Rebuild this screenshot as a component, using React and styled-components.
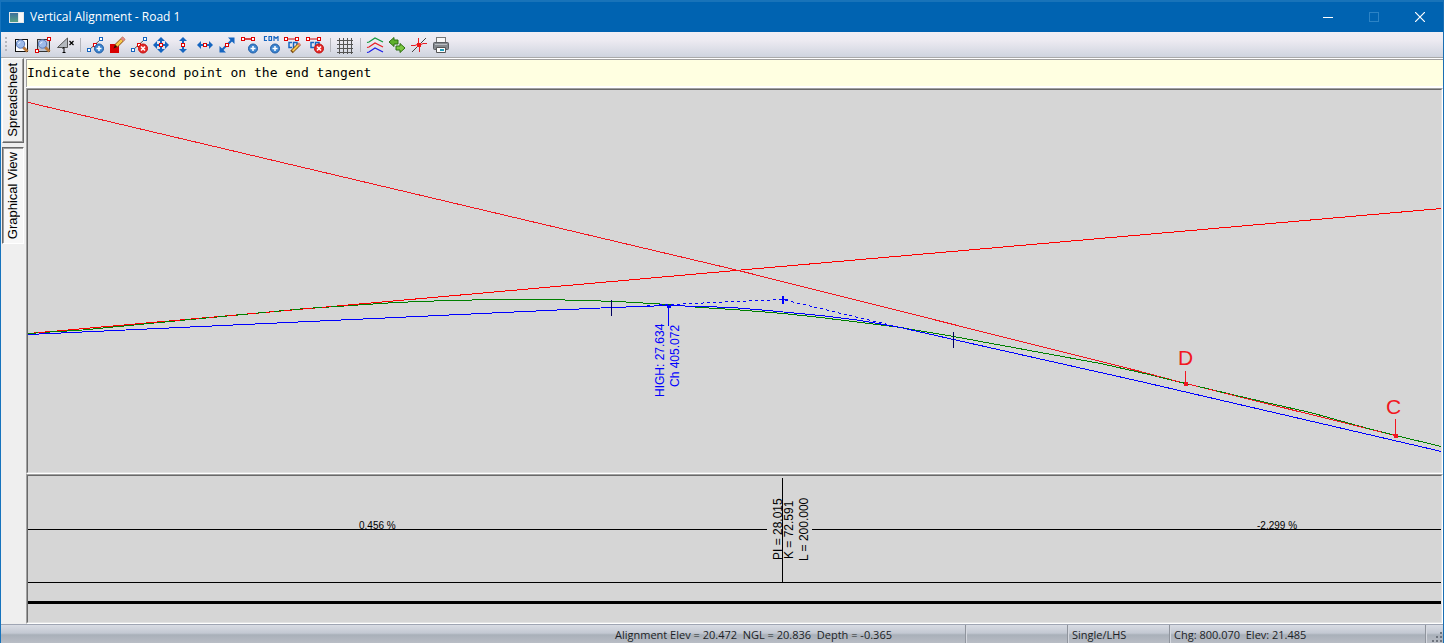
import React, { useState } from "react";
import styled, { createGlobalStyle } from "styled-components";

const GlobalStyle = createGlobalStyle`
  * { box-sizing: border-box; }
  body { margin: 0; background: #f0f0f0; font-family: "Open Sans", "Noto Sans", sans-serif; }
  button { font: inherit; color: inherit; }
`;

const Window = styled.div`
  display: flex;
  flex-direction: column;
  min-height: 100vh;
  border-left: 1px solid #1673bd;
  border-right: 1px solid #1a6fb3;
`;

const TitleBar = styled.header`
  display: flex;
  align-items: center;
  height: 32px;
  padding-left: 8px;
  border-top: 2px solid #1873b9;
  background: #0063b1;
  color: #fff;
`;

const Title = styled.h1`
  flex: 1;
  margin: 0 0 0 6px;
  font-size: 12px;
  line-height: 16px;
  font-weight: 400;
`;

const CaptionButton = styled.button`
  display: flex;
  align-items: center;
  justify-content: center;
  width: 46px;
  height: 28px;
  padding: 0;
  border: 0;
  background: transparent;
  color: ${(p) => (p.disabled ? "#2c83c5" : "#fff")};
`;

const Toolbar = styled.div`
  display: flex;
  align-items: center;
  height: 26px;
  padding-left: 4px;
  background: linear-gradient(#f0eff5, #eceaf1 35%, #cfd4df);
  border-bottom: 1px solid #a9a9a9;
`;

const Grip = styled.span`
  width: 2px;
  height: 16px;
  margin-right: 3px;
  background: repeating-linear-gradient(#b4b6bd 0 2px, transparent 2px 4px);
`;

const ToolButton = styled.button`
  display: flex;
  align-items: center;
  justify-content: center;
  width: 22px;
  height: 22px;
  padding: 0;
  border: 0;
  background: transparent;
`;

const ToolSeparator = styled.span`
  width: 8px;
  height: 14px;
  display: flex;
  justify-content: center;
  &::before {
    content: "";
    width: 1px;
    background: #b3b4bb;
  }
`;

const Body = styled.main`
  display: flex;
  flex: 1;
  background: #efefef;
`;

const TabColumn = styled.nav`
  display: flex;
  flex-direction: column;
  flex: none;
  gap: 4px;
  width: 25px;
  padding: 0 2px 0 1px;
`;

const Tab = styled.button`
  display: flex;
  align-items: center;
  justify-content: center;
  width: 22px;
  padding: ${(p) => (p.$active ? "4px 1px 4px 0" : "4px 1px 5px 0")};
  border: 1px solid;
  border-color: ${(p) => (p.$active ? "#696969 #fff #fff #696969" : "#fff #696969 #696969 #fff")};
  box-shadow: ${(p) => (p.$active ? "inset 1px 1px #a0a0a0" : "inset -1px -1px #a0a0a0")};
  background: ${(p) => (p.$active ? "#f7f7f7" : "#f0f0f0")};
  color: #000;
  font: 13px/16px "Liberation Sans", Arial, sans-serif;
`;

const TabLabel = styled.span`
  writing-mode: vertical-rl;
  transform: rotate(180deg);
  white-space: nowrap;
`;

const Content = styled.div`
  flex: 1;
  min-width: 0;
`;

const Prompt = styled.p`
  height: 30px;
  margin: 0;
  padding: 0 0 0 1px;
  border-top: 1px solid #fff;
  border-bottom: 1px solid #fff;
  box-shadow: inset 0 1px #a0a0a0, inset 1px 0 #a0a0a0, inset 0 -1px #fff;
  background: #ffffe1;
  color: #000;
  font: 13px/28px "DejaVu Sans Mono", monospace;
  white-space: nowrap;
`;

const Panel = styled.section`
  border: 1px solid;
  border-color: #a0a0a0 #fff #fff #a0a0a0;
`;

const Drawing = styled.div`
  border: 1px solid;
  border-color: #696969 #e3e3e3 #e3e3e3 #696969;
  background: #d6d6d6;
  svg {
    display: block;
    width: 100%;
    height: auto;
  }
  text {
    font-family: "Liberation Sans", Arial, sans-serif;
  }
`;

const StatusBar = styled.footer`
  display: flex;
  height: 19px;
  border-top: 1px solid #9fa5b3;
  background: linear-gradient(#d9dce4, #c3c8d2 45%, #a9b0b9 55%, #b9bdc5);
  color: #1c1f26;
  font-size: 11px;
  line-height: 20px;
  white-space: pre;
`;

const StatusPane = styled.div`
  flex: ${(p) => (p.$width ? "none" : "1")};
  width: ${(p) => (p.$width ? p.$width + "px" : "auto")};
  padding-left: 4px;
  border-right: ${(p) => (p.$open ? "0" : "1px solid #8f949d")};
  box-shadow: ${(p) => (p.$open ? "none" : "1px 0 #d5d8df")};
`;

const SizeGrip = styled.div`
  display: flex;
  align-items: flex-end;
  justify-content: flex-end;
  width: 17px;
  margin-left: auto;
`;

const Icon = ({ children }) => (
  <svg width="18" height="18" viewBox="0 0 18 18" fill="none" aria-hidden="true">
    {children}
  </svg>
);

const Node = ({ x, y, color = "#1565c0" }) => (
  <rect x={x + 0.5} y={y + 0.5} width="3" height="3" fill="#fff" stroke={color} />
);

const Segment = () => (
  <>
    <path d="M3 14L14 4" stroke="#555" />
    <Node x={1} y={12} />
    <Node x={13} y={1} />
    <Node x={7} y={7} color="#e00000" />
  </>
);

const PlusBadge = () => (
  <>
    <circle cx="13" cy="12.5" r="4.5" fill="#3f86cf" stroke="#1d5ba6" />
    <path d="M10.5 12.5h5M13 10v5" stroke="#fff" strokeWidth="1.5" />
  </>
);

const DeleteBadge = () => (
  <>
    <circle cx="13" cy="12.5" r="4.5" fill="#e42a2a" stroke="#c01010" />
    <path d="M11 10.5l4 4M15 10.5l-4 4" stroke="#fff" strokeWidth="1.6" />
  </>
);

const Magnifier = () => (
  <>
    <path d="M10.5 10.5l5 5" stroke="#b9793c" strokeWidth="2.8" />
    <circle cx="8.500" cy="8" r="4.200" fill="#9db9e8" stroke="#5b78b8" />
    <path d="M6.500 8q0-2 2-2" stroke="#e8f0ff" />
  </>
);

const CurveMark = () => (
  <>
    <path d="M3 3h10" stroke="#d01010" />
    <Node x={0} y={1} color="#e00000" />
    <Node x={11} y={1} color="#e00000" />
    <path d="M8 6.5H5V11.500H8M9.500 6.500h3.500V11.500h-3.500z" stroke="#1565c0" strokeWidth="1.500" />
  </>
);

const arrow = {
  up: "M9 1l4 4h-3v2H8V5H5z",
  down: "M9 17l4-4h-3v-2H8v2H5z",
  left: "M1 9l4-4v3h2v2H5v3z",
  right: "M17 9l-4-4v3h-2v2h2v3z",
};

const Arrows = ({ dirs }) => (
  <>
    {dirs.map((d) => (
      <path key={d} d={arrow[d]} fill="#1565c0" />
    ))}
    <Node x={7} y={7} color="#e00000" />
  </>
);

const tools = [
  {
    label: "Zoom extents",
    icon: (
      <>
        <rect x="3.5" y="3.5" width="12" height="12" fill="#fff" stroke="#111" />
        <Magnifier />
      </>
    ),
  },
  {
    label: "Zoom window",
    icon: (
      <>
        <rect x="3.5" y="3.5" width="12" height="12" fill="#bcc3d0" stroke="#333" />
        <Magnifier />
        <rect x="1.5" y="13.5" width="3" height="3" fill="#fff" stroke="#e00000" />
        <rect x="13.500" y="1.500" width="3" height="3" fill="#fff" stroke="#e00000" />
      </>
    ),
  },
  {
    label: "Vertical exaggeration",
    icon: (
      <>
        <path d="M1.5 11.5L11.5 2v9.5z" fill="#b4b8be" stroke="#555" />
        <path d="M6.5 12.5l1.5-1v5M6.5 16.5h3" stroke="#000" />
        <path d="M13.500 5l4 4M17.500 5l-4 4" stroke="#000" strokeWidth="1.2" />
      </>
    ),
  },
  null,
  { label: "Add point", icon: (<><Segment /><PlusBadge /></>) },
  {
    label: "Edit point",
    icon: (
      <>
        <rect x="2" y="8" width="9" height="9" fill="#d90000" />
        <path d="M8 10L16 2" stroke="#8a4b12" strokeWidth="4" />
        <path d="M8.5 9.5L14 4" stroke="#f6c94c" strokeWidth="2.6" />
        <path d="M14 4l2-2" stroke="#e58a86" strokeWidth="3.5" />
        <path d="M5.500 12.500l1.500-3.500 2 2z" fill="#2b1500" />
      </>
    ),
  },
  { label: "Delete point", icon: (<><Segment /><DeleteBadge /></>) },
  { label: "Move point", icon: <Arrows dirs={["up", "down", "left", "right"]} /> },
  { label: "Move vertically", icon: <Arrows dirs={["up", "down"]} /> },
  { label: "Move horizontally", icon: <Arrows dirs={["left", "right"]} /> },
  {
    label: "Move along grade",
    icon: (
      <>
        <path d="M3 15L15 3" stroke="#1565c0" strokeWidth="2" strokeDasharray="7 3" />
        <path d="M16.500 1.500v6.500l-6.500-6.500zM1.500 16.500V10l6.500 6.500z" fill="#1565c0" />
        <Node x={7} y={7} color="#e00000" />
      </>
    ),
  },
  {
    label: "Add tangent",
    icon: (
      <>
        <path d="M3 3h10" stroke="#d01010" strokeWidth="1.500" />
        <Node x={1} y={1} color="#e00000" />
        <Node x={11} y={1} color="#e00000" />
        <PlusBadge />
      </>
    ),
  },
  {
    label: "Add comment",
    icon: (
      <>
        <path
          d="M5 0.500H2.500v4H5M7 0.500h2.500v4H7zM12 5V0.500l2 2 2-2V5"
          stroke="#1565c0"
          strokeWidth="1.2"
        />
        <PlusBadge />
      </>
    ),
  },
  {
    label: "Edit curve",
    icon: (
      <>
        <CurveMark />
        <path d="M7.500 16l8-8" stroke="#7a4a12" strokeWidth="3.6" />
        <path d="M8.500 15l6-6" stroke="#f4c64e" strokeWidth="2" />
        <path d="M14.500 9l1.500-1.500" stroke="#e0837c" strokeWidth="3" />
      </>
    ),
  },
  { label: "Delete curve", icon: (<><CurveMark /><DeleteBadge /></>) },
  null,
  {
    label: "Grid",
    icon: (
      <path
        d="M1 4.5h16M1 8.5h16M1 12.5h16M1 16.5h16M3.5 2v16M7.5 2v16M11.5 2v16M15.5 2v16"
        stroke="#555"
      />
    ),
  },
  null,
  {
    label: "Surfaces",
    icon: (
      <>
        <path d="M1 6.5l2-.5 6-4 8 4" stroke="#11983b" strokeWidth="1.2" />
        <path d="M1 11.5l2-.5 6-4 8 4" stroke="#e81c24" strokeWidth="1.2" />
        <path d="M1 16.5l2-.5 6-4 8 4" stroke="#1c1ce8" strokeWidth="1.2" />
      </>
    ),
  },
  {
    label: "Swap direction",
    icon: (
      <>
        <path d="M1 6l5-4.500V4h4v4H6v2.500z" fill="#5fb02c" stroke="#2c6e10" />
        <path d="M17 12l-5-4.500V10H8v4h4v2.500z" fill="#7cc843" stroke="#2c6e10" />
      </>
    ),
  },
  {
    label: "Intersection",
    icon: (
      <>
        <path d="M2 16L16 2" stroke="#444" />
        <path d="M1 9.5h4l2-1h4l2-1h4" stroke="#e81c24" />
        <path d="M8.5 2v5l1 3v6" stroke="#e81c24" />
        <rect x="7" y="7" width="4" height="4" fill="#f01818" />
      </>
    ),
  },
  {
    label: "Print",
    icon: (
      <>
        <rect x="4.5" y="1.5" width="9" height="6" fill="#f8f8f8" stroke="#777" />
        <rect x="1.5" y="6.5" width="15" height="7" rx="1" fill="#85898e" stroke="#5a5d62" />
        <path d="M3 8.5h12" stroke="#b9bdc2" />
        <path d="M4.5 11.5h9v5h-9z" fill="#fff" stroke="#555" />
        <path d="M8 14h4" stroke="#20a0c0" strokeWidth="2" />
      </>
    ),
  },
];

const points = {
  startTangent: "28,333 735,270 1441,208",
  endTangent: "28,102 738,270 1140,371 1185,383 1395,435",
  ground:
    "28,333 57,331 77,330 190,319 305,308 336,306 395,302 446,300 498,299 546,299 583,300 617,301 651,303 668,304 700,307 733,309 783,313 820,317 900,327 953,336 1040,352 1100,363 1140,372 1185,383 1240,396 1270,403 1310,412 1360,426 1395,435 1441,446",
  alignment:
    "28,334 611,307 640,306 668,305 700,306 732,307 767,310 820,315 860,320 900,327 953,339 1140,381 1441,451",
  guide: "647,305 668,304 782,299 900,327",
};

const red = "#f21620";
const blue = "#0000ff";

const Label = ({ x, y, children, fill = "#000" }) => (
  <text transform={`translate(${x} ${y}) rotate(-90)`} fontSize="12" fill={fill}>
    {children}
  </text>
);

const Profile = () => (
  <svg viewBox="28 90 1413 382" role="img" aria-label="Vertical alignment profile">
    <g transform="translate(0.5 0.5)" fill="none" shapeRendering="crispEdges">
      <polyline points={points.ground} stroke="#008000" />
      <polyline points={points.startTangent} stroke="#ff0000" />
      <polyline points={points.endTangent} stroke={red} />
      <polyline points={points.ground} stroke="#008000" strokeDasharray="10 9" />
      <polyline points={points.alignment} stroke={blue} />
      <polyline points={points.guide} stroke={blue} strokeDasharray="3 3" />
      <path d="M668 305v20M779 299h8" stroke={blue} />
      <path d="M611 299v16M953 331v16" stroke="#000060" />
      <path d="M782 295v8" stroke={blue} strokeWidth="2" />
      <path d="M1185 370v12M1395 418v16" stroke={red} />
      <rect x="666" y="304" width="4" height="3" fill={blue} />
      <rect x="1183" y="381" width="4" height="4" fill={red} />
      <rect x="1393" y="433" width="4" height="4" fill={red} />
    </g>
    <Label x={664} y={397} fill={blue}>HIGH: 27.634</Label>
    <Label x={679} y={387} fill={blue}>Ch 405.072</Label>
    <text x="1178" y="365" fontSize="21" fill={red}>D</text>
    <text x="1386" y="414" fontSize="21" fill={red}>C</text>
  </svg>
);

const Grades = () => (
  <svg viewBox="28 476 1413 146" role="img" aria-label="Grades and vertical curves">
    <g transform="translate(0.5 0.5)" stroke="#000" shapeRendering="crispEdges">
      <path d="M27 529H766M811 529H1441M27 582H1441M782 477V582" />
      <path d="M27 602H1441" strokeWidth="3" />
    </g>
    <text x="359" y="529" fontSize="10">0.456 %</text>
    <text x="1257" y="529" fontSize="10">-2.299 %</text>
    <Label x={782} y={560}>PI = 28.015</Label>
    <Label x={793} y={559}>K = 72.591</Label>
    <Label x={808} y={561}>L = 200.000</Label>
  </svg>
);

const tabs = ["Spreadsheet", "Graphical View"];

export default function App() {
  const [active, setActive] = useState("Graphical View");
  return (
    <Window>
      <GlobalStyle />
      <TitleBar>
        <svg width="15" height="11" aria-hidden="true">
          <defs>
            <linearGradient id="pane" x1="0" y1="0" x2="0" y2="1">
              <stop offset="0" stopColor="#3c6f9c" />
              <stop offset="1" stopColor="#58a084" />
            </linearGradient>
          </defs>
          <rect width="15" height="11" fill="#e4e8ea" />
          <rect x="1" y="1" width="8" height="9" fill="url(#pane)" />
          <rect x="10" y="1" width="4" height="9" fill="#f8f8f8" />
        </svg>
        <Title>Vertical Alignment - Road 1</Title>
        <CaptionButton aria-label="Minimize">
          <svg width="10" height="11" stroke="currentColor"><path d="M0 5.5h10" /></svg>
        </CaptionButton>
        <CaptionButton aria-label="Maximize" disabled>
          <svg width="10" height="10" stroke="currentColor" fill="none">
            <rect x="0.5" y="0.5" width="9" height="9" />
          </svg>
        </CaptionButton>
        <CaptionButton aria-label="Close">
          <svg width="10" height="10" stroke="currentColor" strokeWidth="1.2">
            <path d="M0 0l10 10M10 0l-10 10" />
          </svg>
        </CaptionButton>
      </TitleBar>

      <Toolbar role="toolbar">
        <Grip />
        {tools.map((tool, i) =>
          tool ? (
            <ToolButton key={i} aria-label={tool.label}>
              <Icon>{tool.icon}</Icon>
            </ToolButton>
          ) : (
            <ToolSeparator key={i} />
          )
        )}
      </Toolbar>

      <Body>
        <TabColumn>
          {tabs.map((name) => (
            <Tab key={name} $active={name === active} onClick={() => setActive(name)}>
              <TabLabel>{name}</TabLabel>
            </Tab>
          ))}
        </TabColumn>
        <Content>
          <Prompt>Indicate the second point on the end tangent</Prompt>
          <Panel>
            <Drawing><Profile /></Drawing>
          </Panel>
          <Panel>
            <Drawing><Grades /></Drawing>
          </Panel>
        </Content>
      </Body>

      <StatusBar>
        <StatusPane $open />
        <StatusPane $width={355}>{"Alignment Elev = 20.472  NGL = 20.836  Depth = -0.365"}</StatusPane>
        <StatusPane $width={102} />
        <StatusPane $width={102}>Single/LHS</StatusPane>
        <StatusPane $width={256}>{"Chg: 800.070  Elev: 21.485"}</StatusPane>
        <SizeGrip>
          <svg width="12" height="12" fill="#6d737d" aria-hidden="true">
            <path d="M9 1h2v2H9zM5 5h2v2H5zM9 5h2v2H9zM1 9h2v2H1zM5 9h2v2H5zM9 9h2v2H9z" />
          </svg>
        </SizeGrip>
      </StatusBar>
    </Window>
  );
}
